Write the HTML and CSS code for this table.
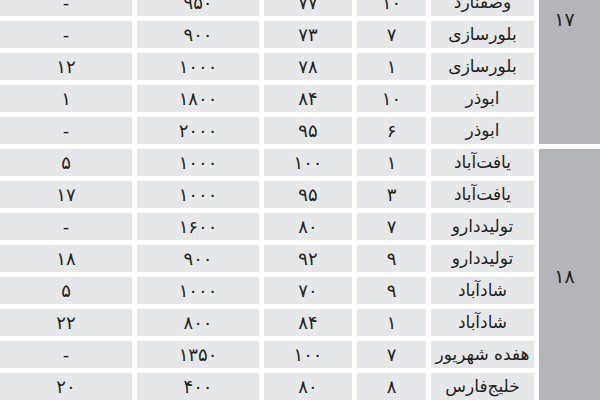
FILE: index.html
```html
<!DOCTYPE html>
<html lang="fa" dir="rtl">
<head>
<meta charset="utf-8">
<link rel="stylesheet" href="styles.css">
</head>
<body>
<table class="grid">
  <colgroup>
    <col class="c-group"><col class="c-name"><col class="c-d"><col class="c-c"><col class="c-b"><col class="c-a">
  </colgroup>
  <tbody>
    <tr><td class="group group-top" rowspan="5">۱۷</td><td class="name">وصفنارد</td><td>۱۰</td><td>۷۷</td><td>۹۵۰</td><td>-</td></tr>
    <tr><td class="name">بلورسازی</td><td>۷</td><td>۷۳</td><td>۹۰۰</td><td>-</td></tr>
    <tr><td class="name">بلورسازی</td><td>۱</td><td>۷۸</td><td>۱۰۰۰</td><td>۱۲</td></tr>
    <tr><td class="name">ابوذر</td><td>۱۰</td><td>۸۴</td><td>۱۸۰۰</td><td>۱</td></tr>
    <tr><td class="name">ابوذر</td><td>۶</td><td>۹۵</td><td>۲۰۰۰</td><td>-</td></tr>
    <tr><td class="group" rowspan="8">۱۸</td><td class="name">یافت‌آباد</td><td>۱</td><td>۱۰۰</td><td>۱۰۰۰</td><td>۵</td></tr>
    <tr><td class="name">یافت‌آباد</td><td>۳</td><td>۹۵</td><td>۱۰۰۰</td><td>۱۷</td></tr>
    <tr><td class="name">تولیددارو</td><td>۷</td><td>۸۰</td><td>۱۶۰۰</td><td>-</td></tr>
    <tr><td class="name">تولیددارو</td><td>۹</td><td>۹۲</td><td>۹۰۰</td><td>۱۸</td></tr>
    <tr><td class="name">شادآباد</td><td>۹</td><td>۷۰</td><td>۱۰۰۰</td><td>۵</td></tr>
    <tr><td class="name">شادآباد</td><td>۱</td><td>۸۴</td><td>۸۰۰</td><td>۲۲</td></tr>
    <tr><td class="name">هفده شهریور</td><td>۷</td><td>۱۰۰</td><td>۱۳۵۰</td><td>-</td></tr>
    <tr><td class="name">خلیج‌فارس</td><td>۸</td><td>۸۰</td><td>۴۰۰</td><td>۲۰</td></tr>
  </tbody>
</table>
</body>
</html>
```

FILE: styles.css
```css
html, body {
  margin: 0;
  padding: 0;
  background: #ffffff;
  overflow: hidden;
}

body {
  font-family: "DejaVu Sans", sans-serif;
  color: #231f20;
}

.grid {
  border-collapse: separate;
  border-spacing: 5px;
  table-layout: fixed;
  width: 611px;
  margin-top: -16px;
  margin-right: -6px;
  direction: rtl;
}

.c-group { width: 62px; }
.c-name { width: 103px; }
.c-d { width: 69px; }
.c-c { width: 88px; }
.c-b { width: 122px; }
.c-a { width: 132px; }

.grid td {
  background: #e6e7e8;
  height: 27px;
  padding: 0;
  text-align: center;
  vertical-align: middle;
  font-size: 18px;
  line-height: 27px;
  white-space: nowrap;
}

.grid td.name {
  font-size: 17px;
}

.grid td.group {
  background: #b3b5b8;
  padding-right: 11px;
  padding-top: 3px;
  font-size: 19px;
}

.grid td.group-top {
  vertical-align: top;
  padding-top: 17px;
}
```
